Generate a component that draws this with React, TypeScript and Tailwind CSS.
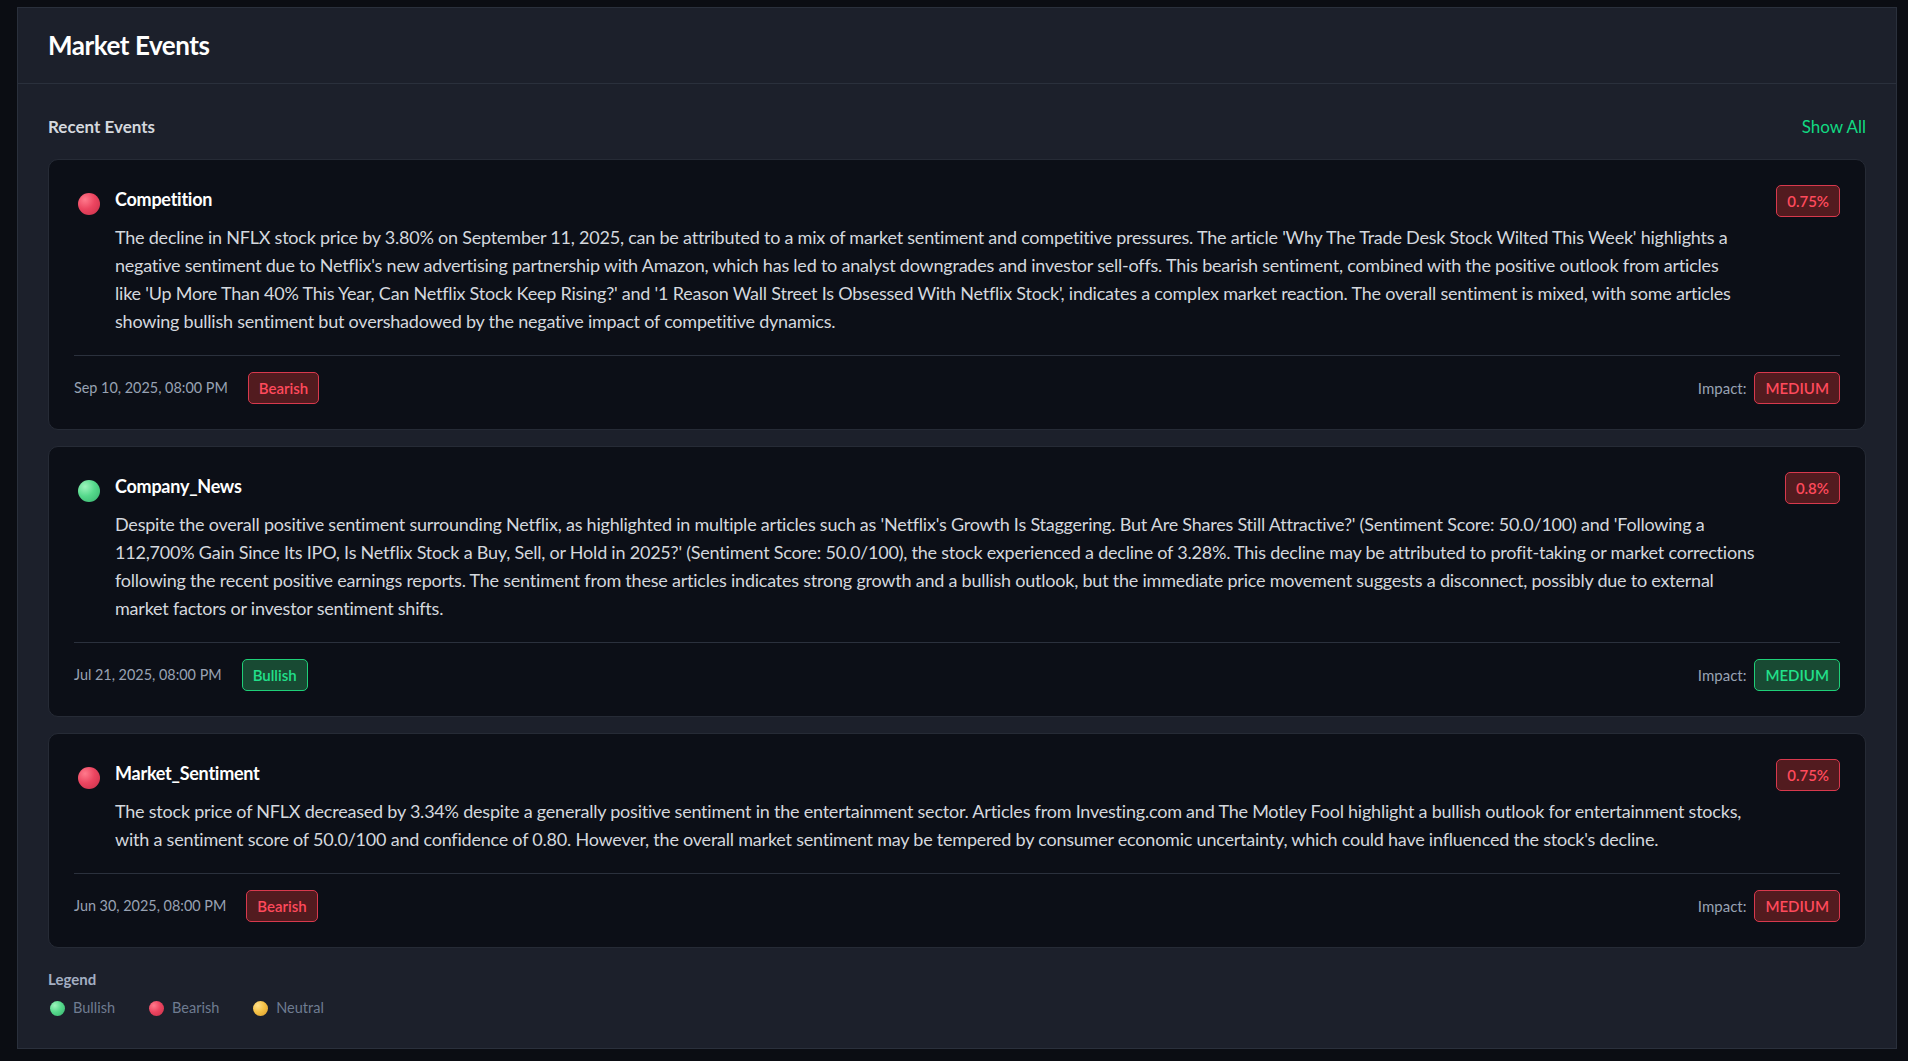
import React from "react";

type Sent = "bearish" | "bullish" | "neutral";

const FONT = { fontFamily: "Lato, 'Noto Sans', 'Open Sans', sans-serif" };

function Dot({ kind, size }: { kind: Sent; size: "lg" | "sm" }) {
  const grad =
    kind === "bearish"
      ? "radial-gradient(circle at 32% 30%, #ff7a8c 0%, #ec4560 45%, #c72f48 100%)"
      : kind === "bullish"
      ? "radial-gradient(circle at 32% 30%, #9ef5bd 0%, #56d98c 45%, #35b06c 100%)"
      : "radial-gradient(circle at 32% 30%, #ffe08a 0%, #f5c246 45%, #d99a2b 100%)";
  const cls =
    size === "lg"
      ? "mt-2 ml-1 h-[22px] w-[22px] shrink-0 rounded-full"
      : "ml-0.5 h-[15px] w-[15px] shrink-0 rounded-full";
  return <span className={cls} style={{ background: grad }} />;
}

function Badge({ kind, children }: { kind: "bearish" | "bullish"; children: React.ReactNode }) {
  const cls =
    kind === "bearish"
      ? "border-[#d8394d] bg-[#521b1f] text-[#ff4a5c]"
      : "border-[#1fcf78] bg-[#184a33] text-[#22e08a]";
  return (
    <span
      className={`inline-flex items-center rounded-[5px] border px-2.5 py-1 text-[15px] leading-[22px] font-semibold ${cls}`}
    >
      {children}
    </span>
  );
}

type Ev = {
  title: string;
  kind: "bearish" | "bullish";
  pct: string;
  lines: string[];
  date: string;
};

const events: Ev[] = [
  {
    title: "Competition",
    kind: "bearish",
    pct: "0.75%",
    date: "Sep 10, 2025, 08:00 PM",
    lines: [
      "The decline in NFLX stock price by 3.80% on September 11, 2025, can be attributed to a mix of market sentiment and competitive pressures. The article 'Why The Trade Desk Stock Wilted This Week' highlights a",
      "negative sentiment due to Netflix's new advertising partnership with Amazon, which has led to analyst downgrades and investor sell-offs. This bearish sentiment, combined with the positive outlook from articles",
      "like 'Up More Than 40% This Year, Can Netflix Stock Keep Rising?' and '1 Reason Wall Street Is Obsessed With Netflix Stock', indicates a complex market reaction. The overall sentiment is mixed, with some articles",
      "showing bullish sentiment but overshadowed by the negative impact of competitive dynamics.",
    ],
  },
  {
    title: "Company_News",
    kind: "bullish",
    pct: "0.8%",
    date: "Jul 21, 2025, 08:00 PM",
    lines: [
      "Despite the overall positive sentiment surrounding Netflix, as highlighted in multiple articles such as 'Netflix's Growth Is Staggering. But Are Shares Still Attractive?' (Sentiment Score: 50.0/100) and 'Following a",
      "112,700% Gain Since Its IPO, Is Netflix Stock a Buy, Sell, or Hold in 2025?' (Sentiment Score: 50.0/100), the stock experienced a decline of 3.28%. This decline may be attributed to profit-taking or market corrections",
      "following the recent positive earnings reports. The sentiment from these articles indicates strong growth and a bullish outlook, but the immediate price movement suggests a disconnect, possibly due to external",
      "market factors or investor sentiment shifts.",
    ],
  },
  {
    title: "Market_Sentiment",
    kind: "bearish",
    pct: "0.75%",
    date: "Jun 30, 2025, 08:00 PM",
    lines: [
      "The stock price of NFLX decreased by 3.34% despite a generally positive sentiment in the entertainment sector. Articles from Investing.com and The Motley Fool highlight a bullish outlook for entertainment stocks,",
      "with a sentiment score of 50.0/100 and confidence of 0.80. However, the overall market sentiment may be tempered by consumer economic uncertainty, which could have influenced the stock's decline.",
    ],
  },
];

function EventCard({ ev }: { ev: Ev }) {
  return (
    <div className="rounded-[10px] border border-[#262b36] bg-[#0c0f17] p-[25px]">
      <div className="flex items-start">
        <Dot kind={ev.kind} size="lg" />
        <div className="ml-[15px] min-w-0 flex-1">
          <h3 className="text-[18px] leading-7 font-bold tracking-[-0.25px] text-white">{ev.title}</h3>
          <p className="mt-2.5 text-[18px] leading-[28px] tracking-[-0.22px] text-[#d4d8de]">
            {ev.lines.map((l, i) => (
              <span key={i} className="block whitespace-nowrap">
                {l}
              </span>
            ))}
          </p>
        </div>
        <div className="ml-4 shrink-0">
          <Badge kind="bearish">{ev.pct}</Badge>
        </div>
      </div>
      <div className="mt-5 flex items-center justify-between border-t border-[#2b313d] pt-4">
        <div className="flex items-center gap-5">
          <span className="text-[14.4px] text-[#98a2b3]">{ev.date}</span>
          <Badge kind={ev.kind}>{ev.kind === "bearish" ? "Bearish" : "Bullish"}</Badge>
        </div>
        <div className="flex items-center gap-2">
          <span className="text-[15px] text-[#98a2b3]">Impact:</span>
          <Badge kind={ev.kind}>MEDIUM</Badge>
        </div>
      </div>
    </div>
  );
}

export default function App() {
  return (
    <div className="min-h-screen bg-[#0b0d13] pt-[7px] pr-[11px] pb-[11px] pl-[17px]" style={FONT}>
      <div className="border border-[#2a303c] bg-[#1c202b]">
        <div className="border-b border-[#2a303c] px-[30px] py-5">
          <h1 className="text-[26px] leading-[35px] font-bold tracking-[-0.45px] text-white">Market Events</h1>
        </div>
        <div className="px-[30px] pt-[31px] pb-[30px]">
          <div className="mb-5 flex items-center justify-between">
            <h2 className="text-[17px] leading-6 font-bold text-[#d4d8de]">Recent Events</h2>
            <button className="text-[17px] leading-6 text-[#12d982]">Show All</button>
          </div>
          <div className="flex flex-col gap-4">
            {events.map((ev) => (
              <EventCard key={ev.title} ev={ev} />
            ))}
          </div>
          <div className="mt-5">
            <div className="text-[15px] leading-[22px] font-bold text-[#a3aec2]">Legend</div>
            <div className="mt-2 flex items-center gap-8">
              {(
                [
                  ["bullish", "Bullish"],
                  ["bearish", "Bearish"],
                  ["neutral", "Neutral"],
                ] as [Sent, string][]
              ).map(([k, label]) => (
                <div key={k} className="flex items-center gap-2">
                  <Dot kind={k} size="sm" />
                  <span className="text-[14.5px] leading-5 text-[#6f7c91]">{label}</span>
                </div>
              ))}
            </div>
          </div>
        </div>
      </div>
    </div>
  );
}
